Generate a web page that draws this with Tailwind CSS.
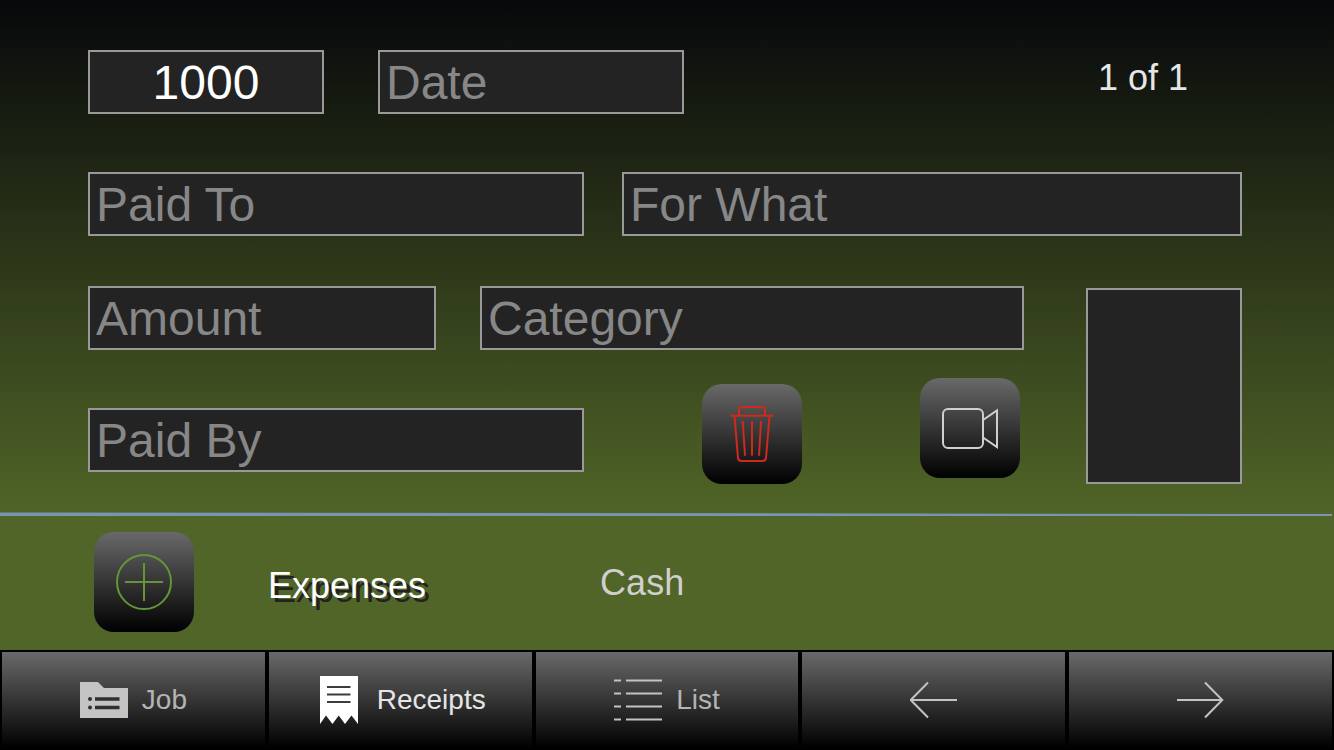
<!DOCTYPE html>
<html lang="en">
<head>
<meta charset="utf-8">
<meta name="viewport" content="width=device-width, initial-scale=1">
<title>Receipts</title>
<script src="https://cdn.jsdelivr.net/npm/@tailwindcss/browser@4"></script>
</head>
<body class="flex min-h-screen flex-col bg-[#516528] font-['Liberation_Sans',Arial,sans-serif]">
  <main class="flex grow flex-col">
    <form class="bg-linear-to-b/srgb from-[#07080b] to-[#506427] pt-[50px] pr-[92px] pb-7 pl-[88px]">
      <div class="flex items-start">
        <input type="text" aria-label="Receipt number" value="1000" class="h-16 w-[236px] border-2 border-[#999] bg-[#232323] px-1.5 text-center text-5xl text-white">
        <input type="text" aria-label="Date" placeholder="Date" class="ml-[54px] h-16 w-[306px] border-2 border-[#999] bg-[#232323] px-1.5 text-5xl text-white placeholder:text-[#878787]">
        <p class="mr-[54px] ml-auto pt-2 text-4xl text-[#e6e6e6]">1 of 1</p>
      </div>

      <div class="mt-[58px] grid grid-cols-[496fr_620fr] gap-[38px]">
        <input type="text" aria-label="Paid To" placeholder="Paid To" class="h-16 w-full min-w-0 border-2 border-[#999] bg-[#232323] px-1.5 text-5xl text-white placeholder:text-[#878787]">
        <input type="text" aria-label="For What" placeholder="For What" class="h-16 w-full min-w-0 border-2 border-[#999] bg-[#232323] px-1.5 text-5xl text-white placeholder:text-[#878787]">
      </div>

      <div class="mt-[50px] flex gap-[62px]">
        <div class="min-w-0 flex-1">
          <div class="grid grid-cols-[348fr_544fr] gap-11">
            <input type="text" aria-label="Amount" placeholder="Amount" class="h-16 w-full min-w-0 border-2 border-[#999] bg-[#232323] px-1.5 text-5xl text-white placeholder:text-[#878787]">
            <input type="text" aria-label="Category" placeholder="Category" class="h-16 w-full min-w-0 border-2 border-[#999] bg-[#232323] px-1.5 text-5xl text-white placeholder:text-[#878787]">
          </div>
          <div class="mt-7 mr-1 flex items-start gap-[118px]">
            <input type="text" aria-label="Paid By" placeholder="Paid By" class="mt-[30px] h-16 min-w-0 flex-1 border-2 border-[#999] bg-[#232323] px-1.5 text-5xl text-white placeholder:text-[#878787]">
            <button type="button" aria-label="Delete receipt" class="mt-1.5 size-[100px] shrink-0 rounded-[20px] bg-linear-to-b/srgb from-[#696969] to-black">
              <svg viewBox="0 0 100 100" class="size-full" fill="none" stroke="#cf2a1b" stroke-width="2">
                <path d="M37 32V26a3 3 0 0 1 3-3H60a3 3 0 0 1 3 3V32M28.500 31.700H71.500M32.500 32L36 74a3.500 3.500 0 0 0 3.500 3H60.500a3.500 3.500 0 0 0 3.500-3L67.500 32M40.700 37L43 71.700M50 37V71.700M59 37L57 71.700"/>
              </svg>
            </button>
            <button type="button" aria-label="Record video" class="size-[100px] shrink-0 rounded-[20px] bg-linear-to-b/srgb from-[#696969] to-black">
              <svg viewBox="0 0 100 100" class="size-full" fill="none" stroke="#cfcfcf" stroke-width="2">
                <rect x="23" y="31" width="40" height="39" rx="5"/>
                <path d="M63 42L77 32.500V69L63 59.500"/>
              </svg>
            </button>
          </div>
        </div>
        <button type="button" aria-label="Receipt photo" class="mt-0.5 h-[196px] w-[156px] shrink-0 border-2 border-[#999] bg-[#232323]"></button>
      </div>
    </form>

    <svg viewBox="0 0 1334 4" preserveAspectRatio="none" class="h-1 w-full shrink-0" aria-hidden="true">
      <path d="M0 0.500L1332 2V4L0 4z" fill="#7896b4"/>
    </svg>

    <section class="flex items-start pt-4 pb-[18px] pl-[94px]">
      <button type="button" aria-label="Add receipt" class="size-[100px] rounded-[20px] bg-linear-to-b/srgb from-[#696969] to-black">
        <svg viewBox="0 0 100 100" class="size-full" fill="none" stroke="#649637" stroke-width="2">
          <circle cx="50" cy="50" r="27"/>
          <path d="M31 50H69M50 31V69"/>
        </svg>
      </button>
      <h1 class="mt-[34px] ml-[74px] text-4xl text-white text-shadow-[4px_4px_0_#222]">Expenses</h1>
      <p class="mt-[31px] ml-[174px] text-4xl text-[#cfcfcf]">Cash</p>
    </section>
  </main>

  <nav class="grid h-[100px] grid-cols-5 bg-black text-[28px] text-[#b4b4b4]">
    <button type="button" class="flex items-center justify-center gap-3.5 border-2 border-black bg-linear-to-b/srgb from-[#696969] to-black">
      <svg viewBox="0 0 48 48" class="size-12" aria-hidden="true">
        <path d="M0 6H18L24 12H48V42H0z" fill="#c3c3c3"/>
        <g fill="#303030"><circle cx="10" cy="23" r="2"/><circle cx="10" cy="31.500" r="2"/><path d="M15 21.200H39.500V24.800H15zM15 29.700H39.500V33.300H15z"/></g>
      </svg>
      Job
    </button>
    <button type="button" aria-current="page" class="flex items-center justify-center gap-3.5 border-2 border-black bg-linear-to-b/srgb from-[#696969] to-black text-[#e6e6e6]">
      <svg viewBox="0 0 48 48" class="size-12" aria-hidden="true">
        <path d="M5 0H43V48L36.500 39.500L30 48L23.700 39.500L17.500 48L11 39.500L5 48z" fill="#fff"/>
        <path d="M12 11H35.500M12 18.500H35.500M12 26H35.500" stroke="#3c3c3c" stroke-width="2"/>
      </svg>
      Receipts
    </button>
    <button type="button" class="flex items-center justify-center gap-3.5 border-2 border-black bg-linear-to-b/srgb from-[#696969] to-black">
      <svg viewBox="0 0 48 48" class="size-12" fill="none" stroke="#c3c3c3" stroke-width="2" aria-hidden="true">
        <path d="M0 4.500H7M12 4.500H48M0 17.500H7M12 17.500H48M0 30.500H7M12 30.500H48M0 43.500H7M12 43.500H48"/>
      </svg>
      List
    </button>
    <button type="button" aria-label="Previous" class="flex items-center justify-center border-2 border-black bg-linear-to-b/srgb from-[#696969] to-black">
      <svg viewBox="0 0 48 48" class="size-12" fill="none" stroke="#c3c3c3" stroke-width="2"><path d="M47 24H1M18 6.500L0.700 24L18 41.500"/></svg>
    </button>
    <button type="button" aria-label="Next" class="flex items-center justify-center border-2 border-black bg-linear-to-b/srgb from-[#696969] to-black">
      <svg viewBox="0 0 48 48" class="size-12" fill="none" stroke="#c3c3c3" stroke-width="2"><path d="M-1 24H45M28 6.500L45.300 24L28 41.500"/></svg>
    </button>
  </nav>
</body>
</html>
